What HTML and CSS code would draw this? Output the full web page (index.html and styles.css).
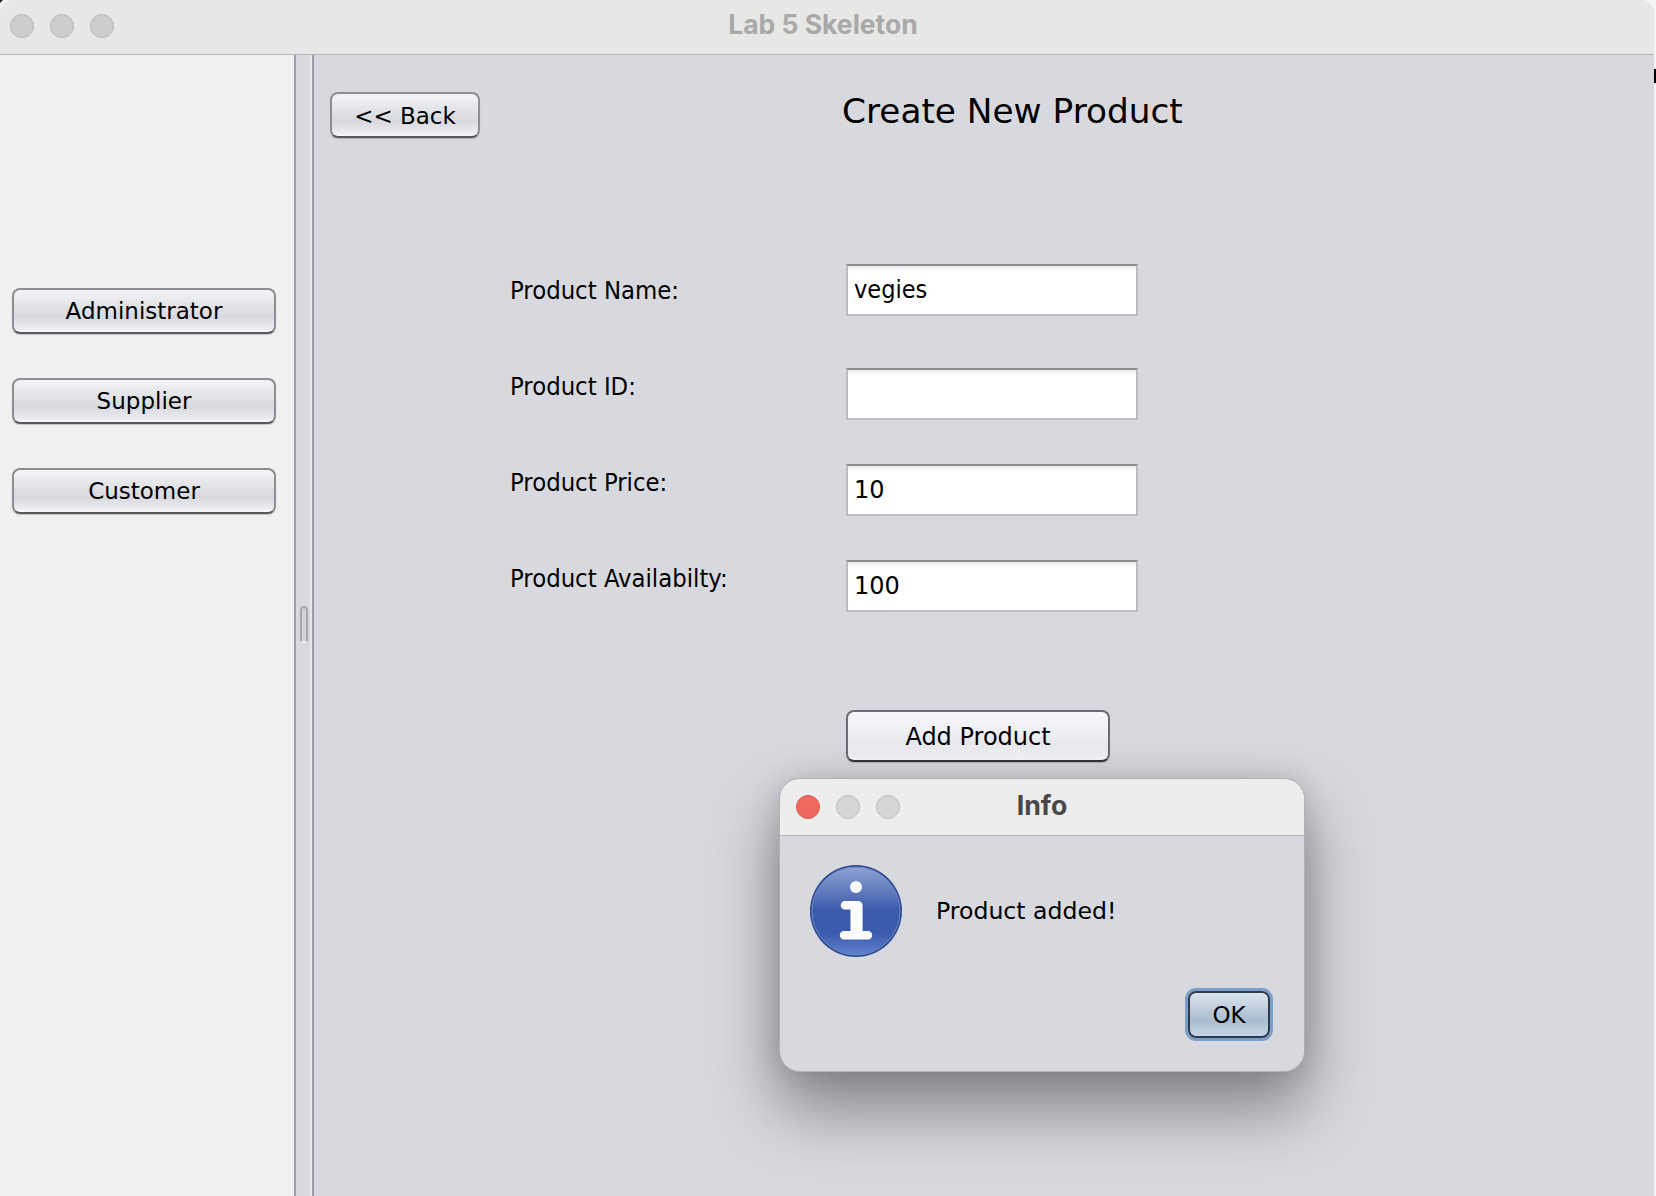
FILE: index.html
```html
<!DOCTYPE html>
<html lang="en">
<head>
    <meta charset="UTF-8">
    <title>Lab 5 Skeleton</title>
    <link rel="stylesheet" href="styles.css">
</head>
<body>
    <div class="window">
        <div class="titlebar">
            <div class="lights">
                <span class="light"></span>
                <span class="light"></span>
                <span class="light"></span>
            </div>
            <div class="window-title">Lab 5 Skeleton</div>
        </div>

        <div class="content">
            <div class="sidebar">
                <button type="button" class="btn side-btn">Administrator</button>
                <button type="button" class="btn side-btn">Supplier</button>
                <button type="button" class="btn side-btn">Customer</button>
            </div>

            <div class="splitter"><span class="grip"></span></div>

            <div class="main">
                <div class="main-head">
                    <button type="button" class="btn back-btn">&lt;&lt; Back</button>
                    <h1 class="page-title">Create New Product</h1>
                </div>

                <form class="product-form">
                    <div class="form-row row-name">
                        <label for="name" class="field-label label-name">Product Name:</label>
                        <input type="text" id="name" class="field field-name" value="vegies">
                    </div>
                    <div class="form-row">
                        <label for="pid" class="field-label">Product ID:</label>
                        <input type="text" id="pid" class="field">
                    </div>
                    <div class="form-row">
                        <label for="price" class="field-label">Product Price:</label>
                        <input type="text" id="price" class="field" value="10">
                    </div>
                    <div class="form-row">
                        <label for="avail" class="field-label">Product Availabilty:</label>
                        <input type="text" id="avail" class="field" value="100">
                    </div>
                    <button type="button" class="btn add-btn">Add Product</button>
                </form>
            </div>
        </div>
    </div>

    <!-- bits of the mouse pointer caught at the screen edges -->
    <span class="pointer-tip"></span>
    <span class="pointer-corner"></span>

    <div class="dialog">
        <div class="dialog-bar">
            <div class="lights dialog-lights">
                <span class="light light-close"></span>
                <span class="light"></span>
                <span class="light"></span>
            </div>
            <div class="dialog-title">Info</div>
        </div>
        <div class="dialog-body">
            <svg class="info-icon" width="92" height="92" viewBox="0 0 92 92">
                <defs>
                    <linearGradient id="infoFill" x1="0" y1="0" x2="0" y2="1">
                        <stop offset="0" stop-color="#8ea2d2"/>
                        <stop offset="0.5" stop-color="#3b5aab"/>
                        <stop offset="0.75" stop-color="#3b5bae"/>
                        <stop offset="1" stop-color="#5f80cc"/>
                    </linearGradient>
                </defs>
                <circle cx="46" cy="46" r="46" fill="#2c4a94"/>
                <circle cx="46" cy="46" r="44" fill="url(#infoFill)" stroke="#6f8ac6" stroke-width="1"/>
                <circle cx="46" cy="22" r="6" fill="#fcfcfd"/>
                <path d="M35 36h13a4.600 4.600 0 0 1 4.600 4.600V66h5.400a4 4 0 0 1 0 8.400H34a4 4 0 0 1 0-8.400h6.500V44.600H35a4.300 4.300 0 0 1 0-8.600z" fill="#fcfcfd"/>
            </svg>
            <div class="dialog-msg">Product added!</div>
        </div>
        <div class="dialog-foot">
            <button type="button" class="btn ok-btn">OK</button>
        </div>
    </div>
</body>
</html>
```

FILE: styles.css
```css
html, body { margin: 0; padding: 0; width: 1656px; height: 1196px; overflow: hidden; background: #f4f4f6; }
body { font-family: 'DejaVu Sans', sans-serif; color: #000; position: relative; }

.window { width: 1654px; height: 1196px; display: flex; flex-direction: column; background: #d8d9de; border-top-left-radius: 14px; border-top-right-radius: 14px; overflow: hidden; position: relative; }
.pointer-tip { position: absolute; left: 1654px; top: 69px; width: 2px; height: 14px; background: #000; }
.pointer-corner { position: absolute; left: 0; top: 0; width: 3px; height: 3px; background: #222; clip-path: polygon(0 0, 100% 0, 0 100%); }

.titlebar { height: 54px; flex: none; display: flex; align-items: center; position: relative; background: #e7e7e5; border-bottom: 1px solid #b4b4b6; }
.lights { display: flex; gap: 16px; padding: 0 0 2px 10px; }
.light { width: 24px; height: 24px; box-sizing: border-box; border-radius: 50%; background: #cdcdcb; border: 1px solid #b8b8b6; }
.window-title { position: absolute; left: 0; right: 8px; top: 8px; text-align: center; font-family: 'Inter', sans-serif; font-weight: 700; font-size: 26.5px; color: #a9a9a9; }

.content { flex: 1; display: flex; min-height: 0; }
.sidebar { width: 294px; flex: none; box-sizing: border-box; background: #f0f0f0; padding: 233px 18px 0 12px; display: flex; flex-direction: column; gap: 44px; }
.splitter { width: 20px; flex: none; box-sizing: border-box; border-left: 2px solid #9b9ca6; border-right: 2px solid #9b9ca6; box-shadow: inset -2px 0 0 #e6e7ea; padding: 551px 0 0 4px; }
.grip { display: block; width: 8px; height: 37px; box-sizing: border-box; border: 2px solid #a5a6ae; border-bottom-color: #f2f2f4; border-radius: 4px; background: #d3d4da; }

.main { flex: 1; padding: 37px 0 0 16px; }
.main-head { display: flex; align-items: flex-start; }
.page-title { margin: -3px 0 0 362px; font-weight: 400; font-size: 34.3px; line-height: 44px; }

.btn { box-sizing: border-box; font-family: 'DejaVu Sans', sans-serif; font-size: 24px; color: #000; border: 2px solid #8e8e92; border-bottom-color: #58585c; border-radius: 8px; background: linear-gradient(to bottom, #f3f4f7 0%, #e6e7eb 30%, #d8d9de 65%, #e8e9ee 88%, #f6f7fb 100%); box-shadow: 0 1px 1px rgba(0,0,0,0.18); padding: 2px 0 0; }
.side-btn { width: 264px; height: 46px; flex: none; font-size: 23px; padding-top: 0; }
.back-btn { width: 150px; height: 46px; flex: none; font-size: 23px; }

.product-form { margin-top: 126px; padding-left: 180px; display: flex; flex-direction: column; }
.form-row { display: flex; height: 52px; margin-bottom: 44px; }
.form-row.row-name { margin-bottom: 52px; }
.field-label { width: 336px; flex: none; font-family: 'DejaVu Sans Condensed', 'DejaVu Sans', sans-serif; font-size: 25.4px; line-height: 30px; padding-top: 3px; }
.label-name { padding-top: 11px; }
.field { box-sizing: border-box; width: 292px; height: 52px; border: 2px solid #bbbcc0; border-top-color: #8c8c8e; background: linear-gradient(to bottom, #e6e6e6 0, #fff 5px); padding: 0 6px; margin: 0; font-family: 'DejaVu Sans', sans-serif; font-size: 24px; color: #000; outline: none; border-radius: 0; }
.field-name { font-family: 'DejaVu Sans Condensed', 'DejaVu Sans', sans-serif; font-size: 25px; padding-bottom: 2px; }
.add-btn { width: 264px; height: 52px; margin: 54px 0 0 336px; border-color: #6c6c76; border-bottom-color: #333338; background: linear-gradient(to bottom, #f6f7fa 0%, #eff0f3 35%, #e8e9ed 65%, #eceef1 85%, #f8f9fb 100%); }

.dialog { position: absolute; left: 780px; top: 779px; width: 524px; height: 292px; display: flex; flex-direction: column; background: #d8d9de; border-radius: 20px; box-shadow: 0 0 0 1px #b1b1b5, 0 36px 66px 4px rgba(0,0,0,0.38), 0 0 30px rgba(0,0,0,0.14); overflow: hidden; }
.dialog-bar { height: 57px; flex: none; box-sizing: border-box; display: flex; align-items: center; position: relative; background: #ededed; border-bottom: 1px solid #b3b3b7; }
.dialog-lights { padding: 0 0 0 16px; }
.dialog-lights .light { background: #d5d5d3; border-color: #bcbcba; }
.dialog-lights .light-close { background: #ee6a5f; border-color: #d9574e; }
.dialog-title { position: absolute; left: 0; right: 0; top: 10px; text-align: center; font-family: 'Inter', sans-serif; font-weight: 700; font-size: 26.7px; color: #484848; }
.dialog-body { display: flex; align-items: center; padding: 29px 0 0 30px; gap: 34px; }
.dialog-msg { font-size: 23.6px; }
.info-icon { flex: none; display: block; }
.dialog-foot { display: flex; justify-content: flex-end; padding: 34px 34px 0 0; }
.ok-btn { width: 82px; height: 47px; font-size: 23px; padding: 0; border: 2px solid #2f3a4c; border-radius: 8px; background: linear-gradient(to bottom, #dbe4ee 0%, #b9c8d8 45%, #a9bccf 65%, #c6d6e8 100%); box-shadow: 0 0 0 3px #7b9fcb; }
```
